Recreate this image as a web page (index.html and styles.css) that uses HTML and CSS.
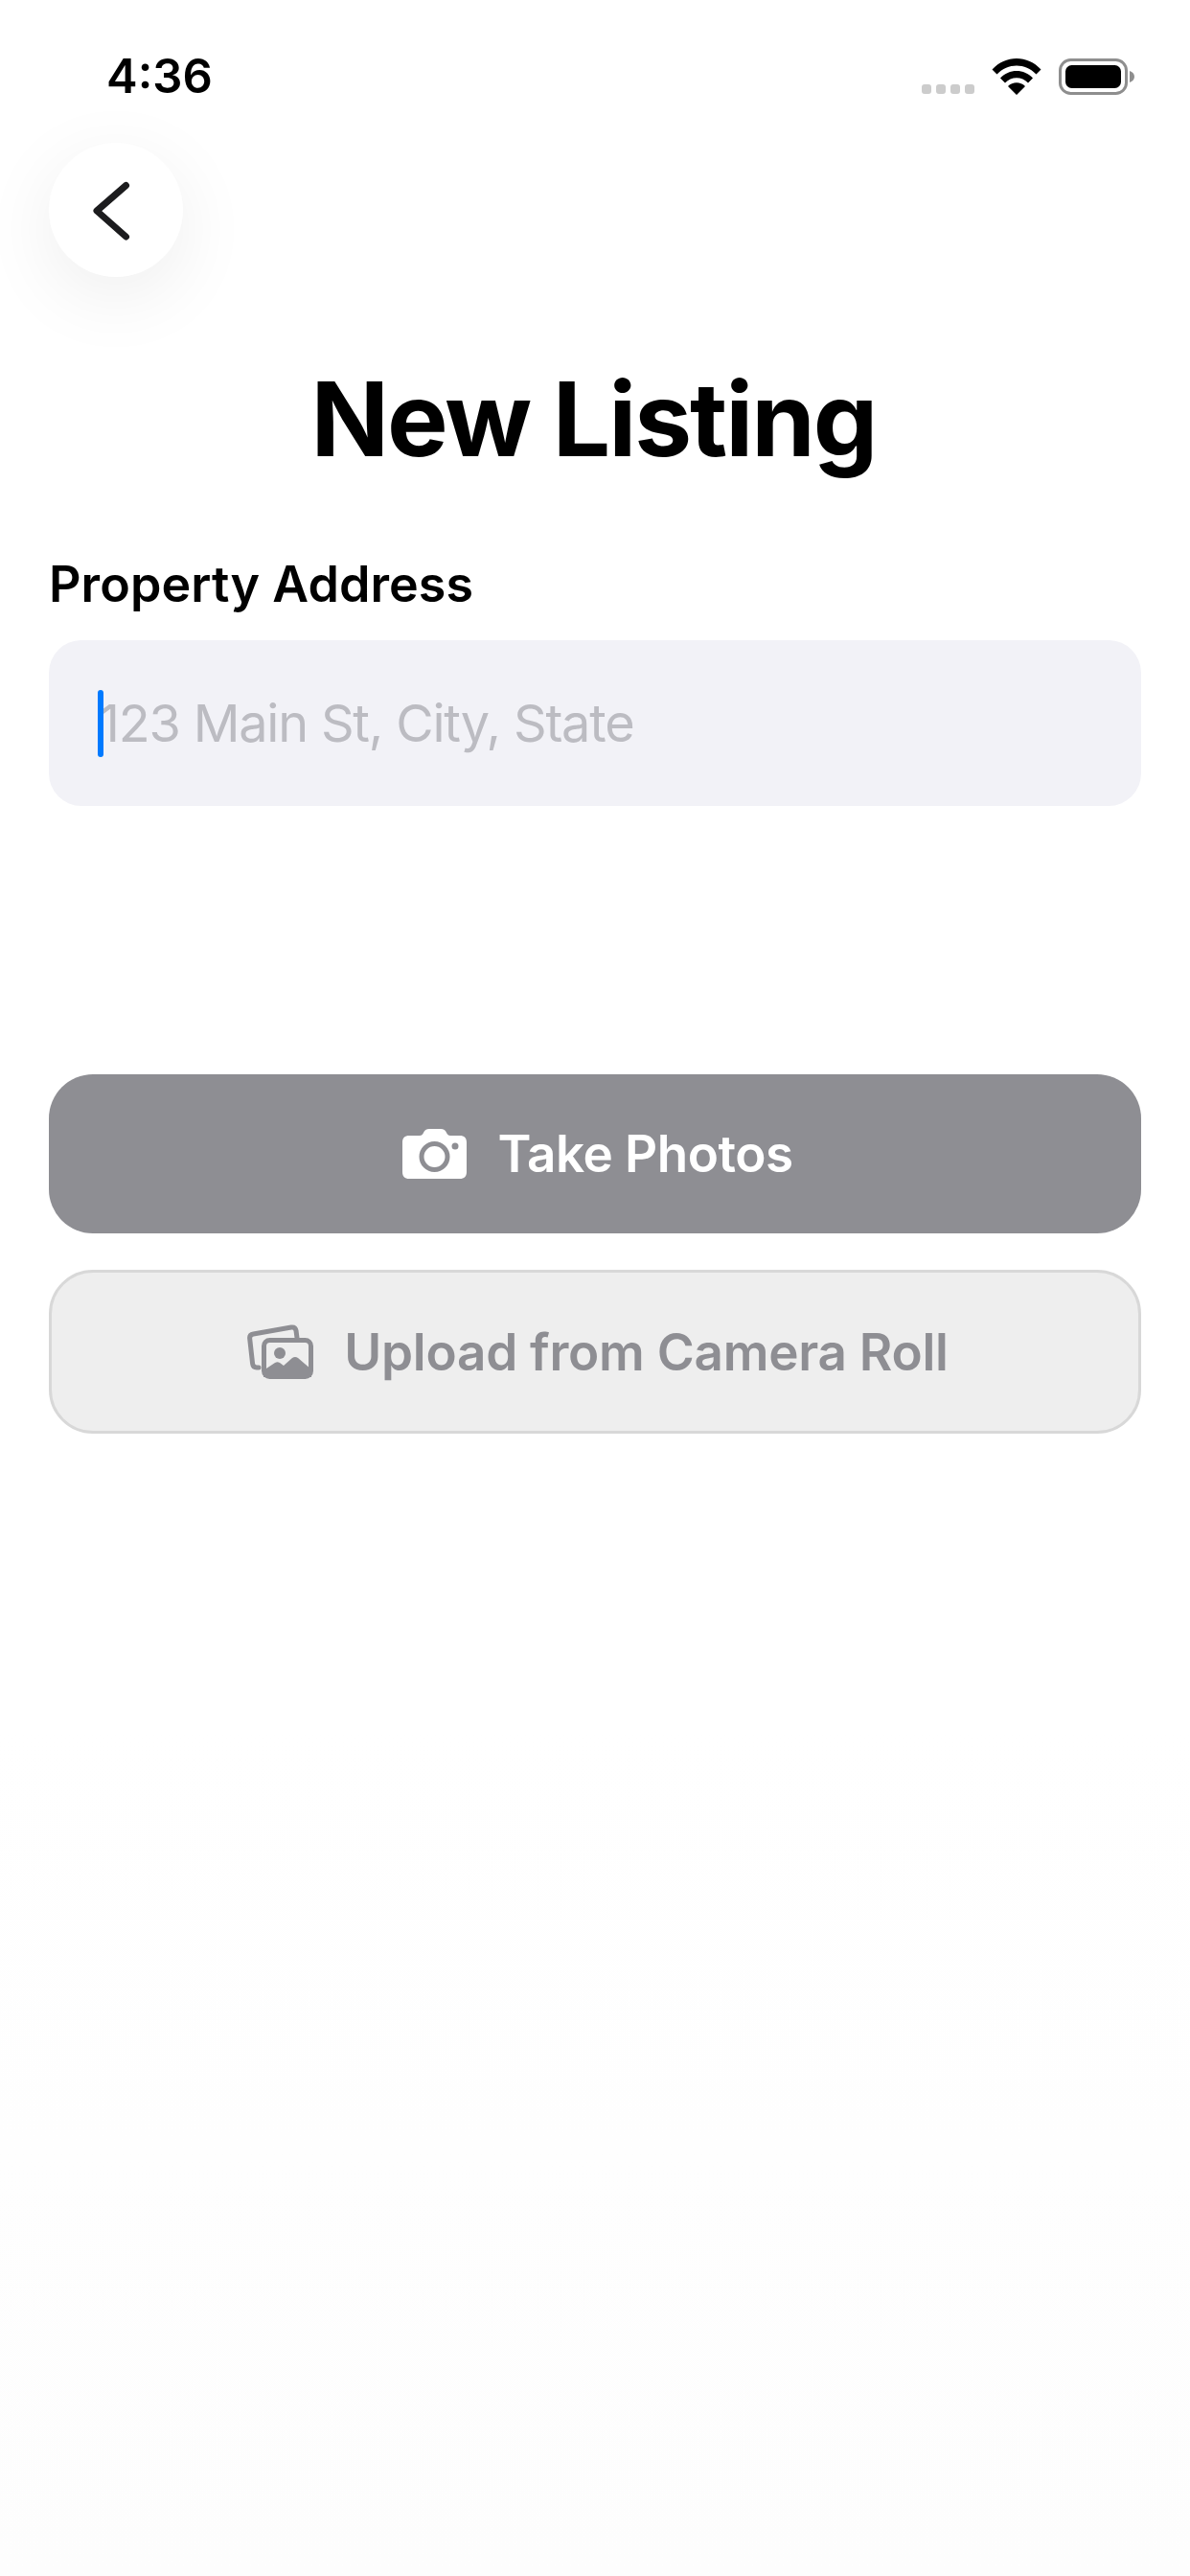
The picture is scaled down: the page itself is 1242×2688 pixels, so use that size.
FILE: index.html
```html
<!DOCTYPE html>
<html lang="en">
<head>
<meta charset="utf-8">
<title>New Listing</title>
<link rel="stylesheet" href="styles.css">
</head>
<body>
<div class="screen">
  <header class="status">
    <span class="time">4:36</span>
    <div class="status-icons">
      <div class="signal"><i></i><i></i><i></i><i></i></div>
      <svg class="wifi" width="52" height="39" viewBox="0 0 52 39">
        <path d="M0.5 12.5 C14 -3 38 -3 51.5 12.5 L46.5 17.5 C35 5.5 17 5.5 5.5 17.5 Z M9 21.5 C18 11.5 34 11.5 43 21.5 L38 26.5 C31.500 19.500 20.500 19.500 14 26.500 Z M17 30 C22 25 30 25 35 30 L26 39 Z" fill="#000"/>
      </svg>
      <svg class="battery" width="79" height="38" viewBox="0 0 79 38">
        <rect x="1.500" y="1.500" width="69" height="35" rx="11" fill="none" stroke="#8e8e8e" stroke-width="3"/>
        <rect x="7" y="7" width="58" height="24" rx="6.500" fill="#000"/>
        <path d="M74 13 C77 14 79 16 79 19 C79 22 77 24 74 25 Z" fill="#8e8e8e"/>
      </svg>
    </div>
  </header>

  <button class="back" type="button" aria-label="Back">
    <svg width="140" height="140" viewBox="0 0 140 140">
      <path d="M80.500 44.500 L50 71 L80.500 98" fill="none" stroke="#1c1c1e" stroke-width="7" stroke-linecap="round" stroke-linejoin="round"/>
    </svg>
  </button>

  <main class="content">
    <h1 class="title">New Listing</h1>
    <label class="label">Property Address</label>
    <div class="input">
      <span class="caret"></span>
      <span class="placeholder">123 Main St, City, State</span>
    </div>

    <div class="actions">
      <button class="btn btn-primary" type="button">
        <svg width="67" height="52" viewBox="0 0 67 52">
          <path fill-rule="evenodd" fill="#fff" d="M7 7 H18 C20 7 21 6 22 4 C23 1.500 25 0 28 0 H40 C43 0 45 1.500 46 4 C47 6 48 7 50 7 H60 C64.500 7 67 9.500 67 14 V45 C67 49.500 64.500 52 60 52 H7 C2.500 52 0 49.500 0 45 V14 C0 9.500 2.500 7 7 7 Z"/>
          <circle cx="33.500" cy="29" r="13.500" fill="none" stroke="#8e8e93" stroke-width="5"/>
          <circle cx="55" cy="18" r="3.500" fill="#8e8e93"/>
        </svg>
        <span>Take Photos</span>
      </button>
      <button class="btn btn-secondary" type="button">
        <svg width="69" height="57" viewBox="0 0 69 57">
          <path d="M12 45 H10 C7.500 45 6 44 5.600 41 L2.700 15 C2.300 12 3.500 10.500 6.500 10 L46 3 C49 2.600 50.500 3.700 51 6.500 L52 14" fill="none" stroke="#8e8e93" stroke-width="5" stroke-linecap="round"/>
          <rect x="17.500" y="16.500" width="49" height="38" rx="6" fill="none" stroke="#8e8e93" stroke-width="5"/>
          <path d="M17 48 L29 40 C31 39 32 39 34 40 L38 43 L47 35 C49 33.500 51 33.500 53 35 L67 47 V55 H17 Z" fill="#8e8e93"/>
          <circle cx="34" cy="30" r="6" fill="#8e8e93"/>
        </svg>
        <span>Upload from Camera Roll</span>
      </button>
    </div>
  </main>
</div>
</body>
</html>
```
FILE: styles.css
```css
* {
  box-sizing: border-box;
}

html,
body {
  margin: 0;
  padding: 0;
  background: #fff;
}

body {
  font-family: Inter, "Liberation Sans", sans-serif;
  color: #000;
}

.screen {
  width: 1242px;
  height: 2688px;
  overflow: hidden;
  background: linear-gradient(#fff 0, #fff 1800px, #fdfdfd 2688px);
}

.status {
  display: flex;
  justify-content: space-between;
  align-items: flex-start;
  height: 149px;
  padding: 53px 58px 0 111px;
}

.time {
  font-size: 49px;
  font-weight: 600;
  line-height: 54px;
}

.status-icons {
  display: flex;
  align-items: flex-start;
  gap: 18px;
  padding-top: 8px;
}

.signal {
  display: flex;
  gap: 5px;
  padding-top: 27px;
}

.signal i {
  display: block;
  width: 10px;
  height: 10px;
  border-radius: 3px;
  background: #cccccc;
}

.wifi {
  margin-top: -1px;
}

.back {
  display: block;
  width: 140px;
  height: 140px;
  margin: 0 0 0 51px;
  padding: 0;
  border: 0;
  border-radius: 50%;
  background: #fff;
  box-shadow: 0 20px 80px rgba(0, 0, 0, 0.07);
}

.back svg {
  display: block;
}

.content {
  padding: 0 51px;
}

.title {
  margin: 85px 0 0;
  padding-right: 3px;
  font-size: 107px;
  font-weight: 700;
  line-height: 126px;
  letter-spacing: -2px;
  text-align: center;
}

.label {
  display: block;
  margin-top: 79px;
  font-size: 52px;
  font-weight: 600;
  line-height: 62px;
  letter-spacing: 0.07px;
}

.input {
  position: relative;
  display: flex;
  align-items: center;
  height: 173px;
  margin-top: 27px;
  padding: 0 51px 0 52px;
  border-radius: 34px;
  background: #f2f2f7;
}

.caret {
  position: absolute;
  left: 51px;
  top: 52px;
  width: 6px;
  height: 70px;
  border-radius: 3px;
  background: #007aff;
}

.placeholder {
  font-size: 54px;
  font-weight: 400;
  line-height: 66px;
  letter-spacing: -1.2px;
  color: #bcbcc2;
}

.actions {
  display: flex;
  flex-direction: column;
  gap: 38px;
  margin-top: 280px;
}

.btn {
  display: flex;
  align-items: center;
  justify-content: center;
  gap: 32px;
  width: 100%;
  padding: 0 0 0 6px;
  font-family: inherit;
  font-size: 53px;
  font-weight: 600;
  line-height: 66px;
  letter-spacing: -0.5px;
  border-radius: 46px;
}

.btn svg {
  display: block;
  flex: none;
}

.btn-primary {
  height: 166px;
  border: 0;
  background: #8e8e93;
  color: #fff;
}

.btn-secondary {
  height: 171px;
  border: 3px solid #d8d8d8;
  background: #eeeeee;
  color: #8e8e93;
  letter-spacing: -0.25px;
}
```
